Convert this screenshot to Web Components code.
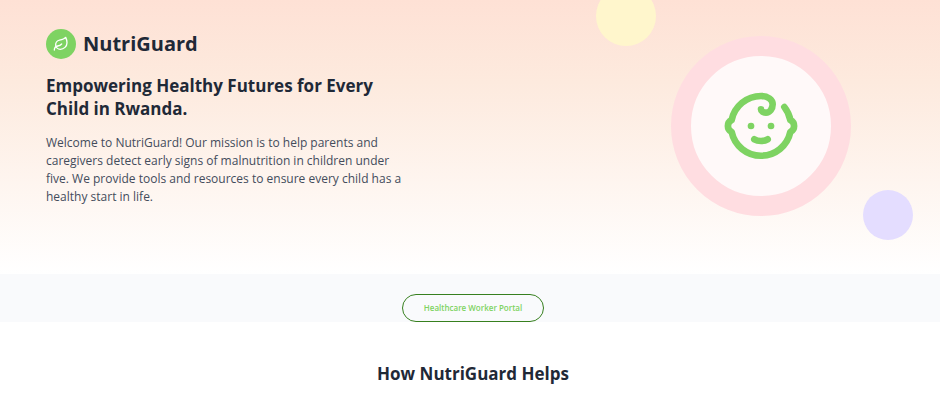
<!DOCTYPE html>
<html lang="en">
<head>
<meta charset="utf-8">
<title>NutriGuard</title>
<style>
  body { margin: 0; background: #fff; color: #1f2937; font-family: "Open Sans", "Noto Sans", sans-serif; }
</style>
</head>
<body>
<nutri-page></nutri-page>

<template id="t-brand">
  <style>
    :host { display: flex; align-items: center; gap: 7px; }
    .badge { display: grid; place-items: center; width: 30px; height: 30px; border-radius: 50%; background: #7ed362; color: #fff; }
    svg { width: 16px; height: 16px; }
    h1 { margin: 0; font-size: 20px; line-height: 30px; font-weight: 700; }
  </style>
  <span class="badge">
    <svg viewBox="0 0 24 24" fill="none" stroke="currentColor" stroke-width="2" stroke-linecap="round" stroke-linejoin="round" aria-hidden="true">
      <path d="M11 20A7 7 0 0 1 9.8 6.1C15.5 5 17 4.48 19 2c1 2 2 4.18 2 8 0 5.5-4.78 10-10 10Z"/>
      <path d="M2 21c0-3 1.85-5.36 5.08-6C9.5 14.52 12 13 13 12"/>
    </svg>
  </span>
  <h1><slot></slot></h1>
</template>

<template id="t-emblem">
  <style>
    :host { display: grid; place-items: center; box-sizing: border-box; width: 180px; height: 180px; border: 20px solid #ffdde1; border-radius: 50%; background: #fff9f9; color: #7ed362; }
    svg { width: 80px; height: 80px; }
  </style>
  <svg viewBox="0 0 24 24" fill="none" stroke="currentColor" stroke-width="2" stroke-linecap="round" stroke-linejoin="round" aria-hidden="true">
    <path d="M9 12h.01"/>
    <path d="M15 12h.01"/>
    <path d="M10 16c.5.3 1.2.5 2 .5s1.5-.2 2-.5"/>
    <path d="M19 6.3a9 9 0 0 1 1.8 3.9 2 2 0 0 1 0 3.6 9 9 0 0 1-17.6 0 2 2 0 0 1 0-3.6A9 9 0 0 1 12 3c2 0 3.5 1.1 3.5 2.5s-.9 2.5-2 2.5c-.8 0-1.5-.4-1.5-1"/>
  </svg>
</template>

<template id="t-hero">
  <style>
    :host { display: block; position: relative; overflow: hidden; background: linear-gradient(#fee1d5, #fdeade 30%, #fff); }
    .row { display: flex; justify-content: space-between; padding: 29px 46px 58px; }
    .copy { flex: 0 1 360px; }
    .copy ::slotted(h2) { margin: 15px 0 14px; font-size: 17px; line-height: 23px; font-weight: 700; }
    .copy ::slotted(p) { margin: 0; font-size: 12px; line-height: 18px; color: #434c5c; }
    .art { flex: 0 0 266px; display: flex; justify-content: center; align-items: flex-start; padding-top: 7px; }
    .dot { position: absolute; border-radius: 50%; }
    .sun { top: -14px; right: 284px; width: 60px; height: 60px; background: #fff6cc; }
    .moon { top: 190px; right: 27px; width: 50px; height: 50px; background: #e4ddff; }
  </style>
  <span class="dot sun"></span>
  <span class="dot moon"></span>
  <div class="row">
    <div class="copy"><slot name="brand"></slot><slot></slot></div>
    <div class="art"><baby-emblem></baby-emblem></div>
  </div>
</template>

<template id="t-portal">
  <style>
    :host { display: flex; justify-content: center; padding: 20px 0 0 6px; background: #f9fafc; }
    button { box-sizing: border-box; min-width: 142px; height: 28px; padding: 0 20px; border: 1px solid #37801f; border-radius: 14px; background: transparent; color: #7ed362; font: 600 8px/12px "Open Sans", "Noto Sans", sans-serif; cursor: pointer; }
  </style>
  <button type="button"><slot></slot></button>
</template>

<template id="t-section">
  <style>
    :host { display: block; padding: 40px 0 18px 6px; text-align: center; }
    h2 { margin: 0; font-size: 17px; line-height: 23px; font-weight: 700; }
  </style>
  <h2><slot></slot></h2>
</template>

<template id="t-page">
  <style>:host { display: block; }</style>
  <nutri-hero>
    <nutri-brand slot="brand">NutriGuard</nutri-brand>
    <h2>Empowering Healthy Futures for Every Child in Rwanda.</h2>
    <p>Welcome to NutriGuard! Our mission is to help parents and caregivers detect early signs of malnutrition in children under five. We provide tools and resources to ensure every child has a healthy start in life.</p>
  </nutri-hero>
  <portal-bar>Healthcare Worker Portal</portal-bar>
  <section-title>How NutriGuard Helps</section-title>
</template>

<script>
  const define = (name, templateId) => customElements.define(name, class extends HTMLElement {
    constructor() {
      super();
      this.attachShadow({ mode: "open" }).append(document.getElementById(templateId).content.cloneNode(true));
    }
  });
  define("nutri-brand", "t-brand");
  define("baby-emblem", "t-emblem");
  define("nutri-hero", "t-hero");
  define("portal-bar", "t-portal");
  define("section-title", "t-section");
  define("nutri-page", "t-page");
</script>
</body>
</html>
